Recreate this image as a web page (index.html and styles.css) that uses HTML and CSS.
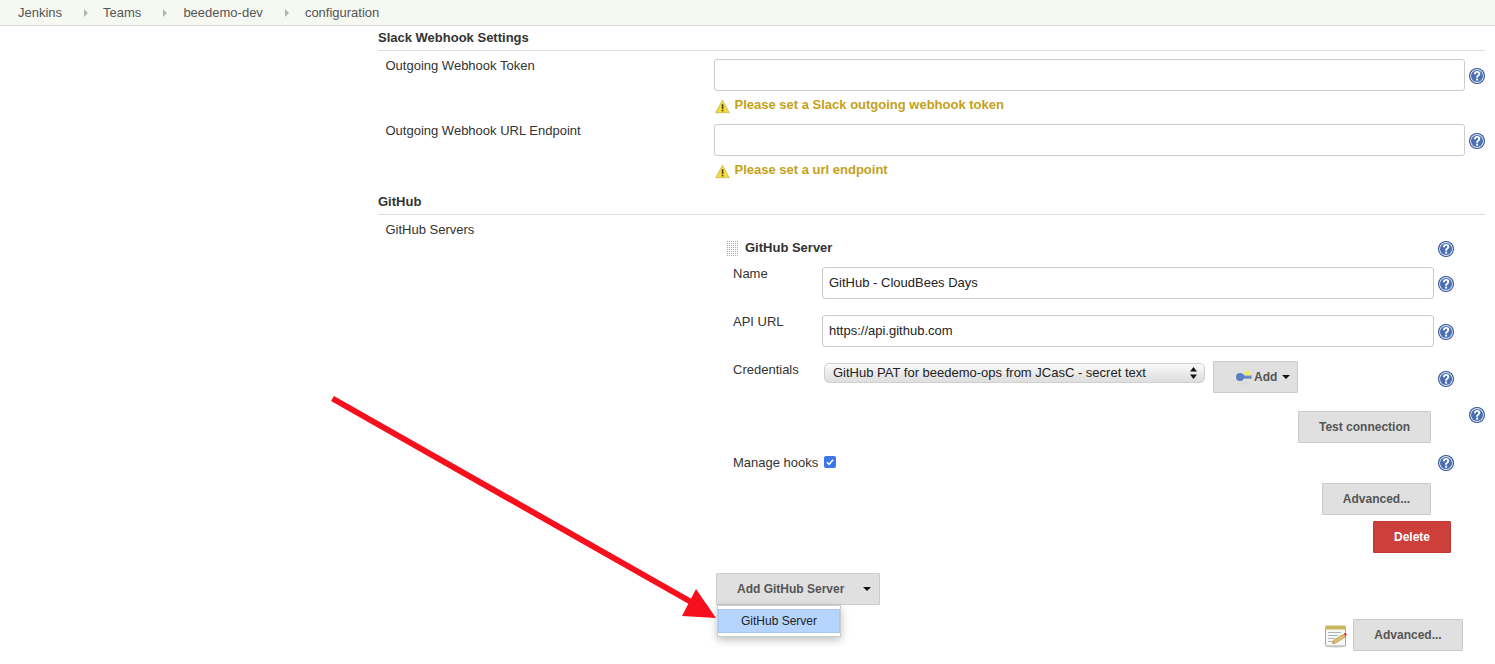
FILE: index.html
```html
<!DOCTYPE html>
<html lang="en">
<head>
<meta charset="utf-8">
<title>Configuration</title>
<link rel="stylesheet" href="styles.css">
</head>
<body>
<svg class="defs" width="0" height="0" aria-hidden="true">
  <symbol id="help" viewBox="0 0 16 16">
    <circle cx="8" cy="8" r="8" fill="#2f5296"/>
    <circle cx="8" cy="8" r="6.9" fill="#e6ecf6"/>
    <circle cx="8" cy="8" r="6" fill="#4a6fb2"/>
    <path d="M4.9 6.2C5 4 6.4 3 8.2 3c1.9 0 3.1 1.2 3.1 2.8 0 1.3-.8 1.9-1.5 2.5-.6.5-.8.8-.8 1.5H7.1c0-1.2.4-1.8 1.2-2.5.6-.5 1-.9 1-1.4 0-.7-.5-1.1-1.1-1.1-.8 0-1.2.5-1.3 1.4z" fill="#fff"/>
    <rect x="7.1" y="10.6" width="2" height="2" fill="#fff"/>
  </symbol>
  <symbol id="warn" viewBox="0 0 16 16">
    <path d="M8 1.2 15.2 14.6H.8z" fill="#f4dc3c" stroke="#c4b24a" stroke-width=".8" stroke-linejoin="round"/>
    <rect x="7.2" y="5.6" width="1.7" height="5" fill="#4a3f10"/>
    <rect x="7.2" y="11.5" width="1.7" height="1.7" fill="#4a3f10"/>
  </symbol>
</svg>

<nav class="crumbs">
  <span class="crumb">Jenkins</span><i class="sep"></i>
  <span class="crumb">Teams</span><i class="sep"></i>
  <span class="crumb">beedemo-dev</span><i class="sep"></i>
  <span class="crumb">configuration</span>
</nav>

<main class="form">
  <h2 class="section">Slack Webhook Settings</h2>
  <div class="row row-first">
    <label class="label">Outgoing Webhook Token</label>
    <input class="input" type="text">
    <svg class="help"><use href="#help"/></svg>
  </div>
  <div class="warning"><svg class="warn-icon"><use href="#warn"/></svg>Please set a Slack outgoing webhook token</div>
  <div class="row">
    <label class="label">Outgoing Webhook URL Endpoint</label>
    <input class="input" type="text">
    <svg class="help"><use href="#help"/></svg>
  </div>
  <div class="warning"><svg class="warn-icon"><use href="#warn"/></svg>Please set a url endpoint</div>

  <h2 class="section section-github">GitHub</h2>
  <div class="servers">
    <label class="label servers-label">GitHub Servers</label>
    <div class="server-col">
      <div class="server-head">
        <span class="handle"></span>
        <strong class="server-title">GitHub Server</strong>
        <svg class="help"><use href="#help"/></svg>
      </div>
      <div class="srow srow-name">
        <label class="label">Name</label>
        <input class="input" type="text" value="GitHub - CloudBees Days">
        <svg class="help"><use href="#help"/></svg>
      </div>
      <div class="srow srow-api">
        <label class="label">API URL</label>
        <input class="input" type="text" value="https://api.github.com">
        <svg class="help"><use href="#help"/></svg>
      </div>
      <div class="srow srow-cred">
        <label class="label">Credentials</label>
        <div class="cred">
          <div class="select">
            <span>GitHub PAT for beedemo-ops from JCasC - secret text</span>
            <svg class="updown" width="7" height="12" viewBox="0 0 7 12"><path d="M3.5 0 7 4.6H0zM3.5 12 0 7.4h7z" fill="#111"/></svg>
          </div>
          <button class="btn btn-add" type="button">
            <svg class="key" width="18" height="16" viewBox="0 0 18 16">
              <ellipse cx="9" cy="14.5" rx="6" ry="1" fill="#d8d8d8"/>
              <circle cx="13.5" cy="4" r="2.3" fill="#f4ef45"/>
              <circle cx="6" cy="8" r="4" fill="#5b7fc0"/>
              <rect x="7" y="6.2" width="10.5" height="3.4" fill="#5b7fc0"/>
              <rect x="11" y="6.2" width="6.5" height="1" fill="#c9d4a8"/>
            </svg>Add<i class="caret caret-add"></i>
          </button>
        </div>
        <svg class="help"><use href="#help"/></svg>
      </div>
      <div class="srow srow-test">
        <button class="btn btn-test" type="button">Test connection</button>
        <svg class="help help-far"><use href="#help"/></svg>
      </div>
      <div class="srow srow-hooks">
        <label class="label">Manage hooks</label>
        <span class="check"><svg width="12" height="12" viewBox="0 0 12 12"><path d="M3 6.2 5.1 8.4 9 3.8" fill="none" stroke="#fff" stroke-width="1.6"/></svg></span>
        <svg class="help"><use href="#help"/></svg>
      </div>
      <div class="end end-adv"><button class="btn btn-adv" type="button">Advanced...</button></div>
      <div class="end end-del"><button class="btn btn-del" type="button">Delete</button></div>
      <div class="add-wrap">
        <button class="btn btn-addserver" type="button"><span>Add GitHub Server</span><i class="caret"></i></button>
        <div class="menu"><div class="menu-item">GitHub Server</div></div>
      </div>
    </div>
  </div>
  <div class="footer-row">
    <svg class="note" width="24" height="24" viewBox="0 0 24 24">
      <ellipse cx="12" cy="22.5" rx="10" ry="1.2" fill="#ddd"/>
      <rect x="1.5" y="3" width="20" height="19" rx="1" fill="#f9f9f4" stroke="#a8a8a0"/>
      <rect x="1.5" y="1.5" width="20" height="4" fill="#c9b560"/>
      <path d="M4 8.5h13M4 11.5h10M4 14.5h7M4 17.5h5" stroke="#a9b5bd" stroke-width="1"/>
      <path d="M8.5 19.5l1-3L19 10.5l2 2.6-9.5 6z" fill="#e5c06a" stroke="#9a7a30" stroke-width=".6"/>
      <path d="M19.5 10l2-1.4 1.3 2-1.3 1.8z" fill="#e0342e"/>
    </svg>
    <button class="btn btn-adv2" type="button">Advanced...</button>
  </div>
</main>

<svg class="arrow" width="400" height="240" viewBox="0 0 400 240" aria-hidden="true">
  <path d="M2.5 3.5 370 212" stroke="#f60f1c" stroke-width="6" fill="none"/>
  <path d="M386 223 352 221 366 194z" fill="#f60f1c"/>
</svg>
</body>
</html>
```

FILE: styles.css
```css
* { box-sizing: border-box; }
html, body { margin: 0; padding: 0; }
body {
  position: relative;
  height: 664px;
  overflow: hidden;
  background: #fff;
  color: #333;
  font-family: "Liberation Sans", Arial, sans-serif;
  font-size: 13px;
  line-height: 16px;
}
.defs { position: absolute; }

.crumbs {
  display: flex;
  align-items: center;
  height: 26px;
  padding-left: 18px;
  background: #f6f8f2;
  border-bottom: 1px solid #d8d8d2;
  color: #555;
}
.sep {
  width: 0;
  height: 0;
  margin: 1px 16px 0 22px;
  border-left: 4px solid #b5b5b5;
  border-top: 4px solid transparent;
  border-bottom: 4px solid transparent;
}
.crumb:first-child + .sep { margin-right: 15px; }

.form { margin: 0 10px 0 378px; }
.section {
  height: 25px;
  margin: 0;
  padding-top: 4px;
  border-bottom: 1px solid #ddd;
  font-size: 13px;
  line-height: 16px;
  font-weight: 700;
}
.section-github { margin-top: 4px; height: 22px; padding-top: 1px; }

.row {
  display: grid;
  grid-template-columns: 336px 751px 20px;
  height: 32px;
}
.row-first { margin-top: 8px; }
.label { display: block; padding: 0; }
.row > .label { padding: 0 0 0 7.5px; margin-top: -1px; }
.help { width: 16px; height: 16px; justify-self: end; margin-top: 9px; }
.input {
  display: block;
  width: 100%;
  height: 32px;
  padding: 0 6px 2px;
  border: 1px solid #ccc;
  border-radius: 3px;
  background: #fff;
  font: 13px/16px "Liberation Sans", Arial, sans-serif;
  color: #222;
  outline: none;
}
.warning {
  display: flex;
  align-items: center;
  height: 33px;
  margin-left: 336px;
  padding: 0 0 5px 1px;
  color: #c4a11a;
  font-weight: 700;
  font-size: 13px;
}
.warn-icon { width: 15px; height: 15px; margin: 2px 4.5px 0 0; }

.servers { display: grid; grid-template-columns: 336px 771px; margin-top: 7px; }
.servers-label { padding-left: 7.5px; }
.server-col { display: block; }

.server-head {
  display: grid;
  grid-template-columns: 12px 1fr 20px;
  column-gap: 7px;
  align-items: center;
  height: 16px;
  margin: 17px 31px 0 12px;
}
.handle {
  display: block;
  width: 12px;
  height: 16px;
  background:
    linear-gradient(90deg, #fff 1px, transparent 1px) 0 0 / 2px 2px,
    linear-gradient(#fff 1px, #a8a8a8 1px) 0 0 / 2px 2px;
}
.server-title { font-weight: 700; font-size: 13px; color: #333; }
.server-head .help { margin-top: 2px; margin-right: 0; }

.srow {
  display: grid;
  grid-template-columns: 89px 612px 20px 31px;
  margin-left: 19px;
}
.srow > .help { grid-column: 3; margin-top: 9px; }
.srow-name { margin-top: 12px; height: 32px; }
.srow-api { margin-top: 16px; height: 32px; }
.srow-name > .label, .srow-api > .label { margin-top: -1px; }
.srow-cred { margin-top: 14px; height: 32px; }
.srow-cred > .label { margin-top: 1px; }
.srow-cred > .help { margin-top: 10px; }

.cred { display: flex; align-items: flex-start; }
.select {
  display: flex;
  align-items: center;
  justify-content: space-between;
  width: 381px;
  height: 20px;
  margin: 2px 8px 0 2px;
  padding: 0 9px 0 8px;
  border: 1px solid #d0d0d0;
  border-radius: 5px;
  background: linear-gradient(#fbfbfb, #e9e9e9 55%, #dedede);
  font-size: 13px;
  color: #222;
}
.updown { margin-right: -2px; }

.btn {
  border: 1px solid #ccc;
  border-radius: 1px;
  background: #e0e0e0;
  color: #555;
  font: 700 12px/16px "Liberation Sans", Arial, sans-serif;
  padding: 0;
  height: 32px;
}
.btn-add {
  display: flex;
  align-items: center;
  justify-content: flex-start;
  width: 85px;
  padding-left: 20px;
}
.key { margin-right: 2px; }
.caret {
  display: inline-block;
  width: 0;
  height: 0;
  border-left: 4px solid transparent;
  border-right: 4px solid transparent;
  border-top: 4px solid #111;
}
.caret-add { margin-left: 5px; }

.srow-test { margin-top: 18px; height: 32px; }
.btn-test { grid-column: 2; justify-self: end; width: 133px; margin-right: 3px; }
.srow-test > .help-far { grid-column: 4; margin-top: -4px; }

.srow-hooks { margin-top: 11px; height: 24px; }
.srow-hooks > .label { margin-top: 1px; }
.srow-hooks > .help { margin-top: 1px; }
.check {
  display: block;
  width: 12px;
  height: 12px;
  margin: 2px 0 0 2px;
  border-radius: 2px;
  background: #3b78e7;
}
.check svg { display: block; }

.end { display: flex; justify-content: flex-end; }
.end-adv { margin-top: 5px; padding-right: 54px; }
.btn-adv { width: 109px; }
.end-del { margin-top: 6px; padding-right: 34px; }
.btn-del {
  width: 78px;
  background: #cc3f3a;
  border-color: #c03a35;
  color: #fff;
}

.add-wrap { position: relative; margin: 20px 0 0 2px; width: 164px; }
.btn-addserver {
  display: block;
  position: relative;
  width: 164px;
  text-align: left;
  padding-left: 20px;
}
.btn-addserver .caret { position: absolute; right: 8px; top: 13px; }
.menu {
  position: absolute;
  left: 1px;
  top: 32px;
  width: 124px;
  height: 32px;
  padding: 3px 0 4px;
  background: #fff;
  border: 1px solid #ccc;
  box-shadow: 0 3px 8px rgba(0, 0, 0, .25);
}
.menu-item {
  height: 24px;
  padding-left: 22px;
  background: #b5d5ff;
  border: 1px solid #a9c8fa;
  font-size: 12px;
  line-height: 22px;
  color: #222;
}

.footer-row {
  display: flex;
  justify-content: flex-end;
  align-items: center;
  column-gap: 5px;
  margin: 14px 22px 0 0;
}
.btn-adv2 { width: 110px; }
.note { margin-top: 2px; }

.arrow { position: absolute; left: 330px; top: 395px; }
```
